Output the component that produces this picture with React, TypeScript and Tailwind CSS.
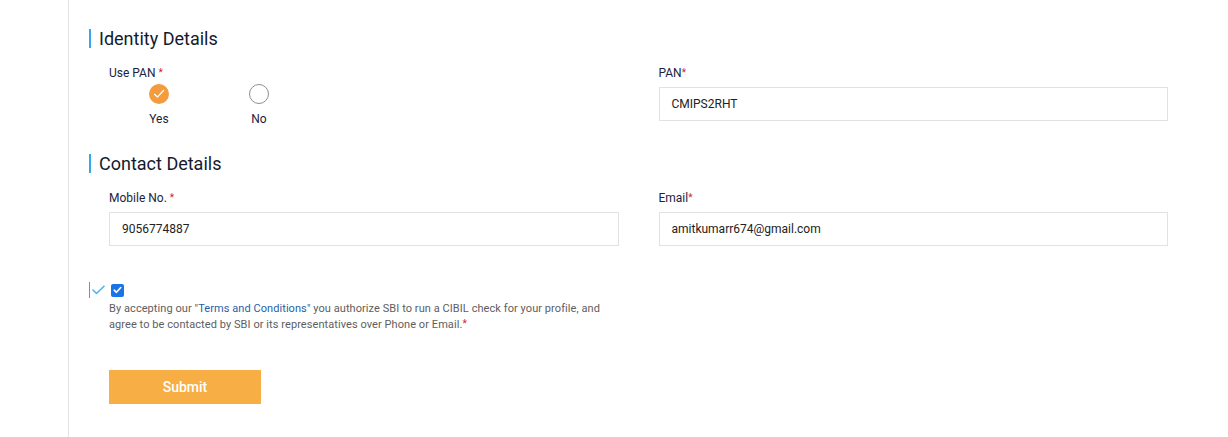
import React from "react";

const Star = () => (
  <span className="text-[#d6232f] text-[10px] relative -top-[1px]">*</span>
);

const SectionHeading = ({ children }: { children: React.ReactNode }) => (
  <div className="flex items-center h-[19px]">
    <div className="w-[2px] h-[19px] bg-[#3aa6ea]" />
    <div className="ml-[8px] text-[18px] leading-[19px] text-[#141a2e]">{children}</div>
  </div>
);

const Label = ({ children }: { children: React.ReactNode }) => (
  <div className="text-[12px] leading-[14px] text-[#1b2340]">{children}</div>
);

const Input = ({ value }: { value: string }) => (
  <div className="h-[34px] border border-[#e2e2e2] bg-white flex items-center px-[12px] text-[12px] text-[#222]">
    {value}
  </div>
);

export default function App() {
  return (
    <div
      className="flex min-h-[437px] bg-white"
      style={{ fontFamily: "Roboto, 'Noto Sans', Arial, sans-serif" }}
    >
      <div className="w-[68px] shrink-0" />
      <div className="w-px shrink-0 bg-[#e3e3e3]" />
      <div className="pl-[20px] pt-[29px] w-[1099px]">
        <SectionHeading>Identity Details</SectionHeading>
        <div className="grid grid-cols-2 gap-x-[40px] pl-[20px] mt-[18px]">
          <div>
            <Label>
              Use PAN <Star />
            </Label>
            <div className="flex mt-[3px]">
              <div className="w-[100px] flex flex-col items-center">
                <div className="w-[20px] h-[20px] rounded-full bg-[#f39b3d] flex items-center justify-center">
                  <svg width="12" height="10" viewBox="0 0 12 10" fill="none">
                    <path d="M1.5 5.2 L4.5 8 L10.5 1.5" stroke="#fff" strokeWidth="1.2" strokeLinecap="round" strokeLinejoin="round" />
                  </svg>
                </div>
                <div className="mt-[8px] text-[12px] leading-[14px] text-[#1b2340]">Yes</div>
              </div>
              <div className="w-[100px] flex flex-col items-center">
                <div className="w-[20px] h-[20px] rounded-full border border-[#8f8f8f] bg-white" />
                <div className="mt-[8px] text-[12px] leading-[14px] text-[#1b2340]">No</div>
              </div>
            </div>
          </div>
          <div>
            <Label>
              PAN<Star />
            </Label>
            <div className="mt-[6px]">
              <Input value="CMIPS2RHT" />
            </div>
          </div>
        </div>

        <div className="mt-[28px]">
          <SectionHeading>Contact Details</SectionHeading>
        </div>
        <div className="grid grid-cols-2 gap-x-[40px] pl-[20px] mt-[18px]">
          <div>
            <Label>
              Mobile No. <Star />
            </Label>
            <div className="mt-[6px]">
              <Input value="9056774887" />
            </div>
          </div>
          <div>
            <Label>
              Email<Star />
            </Label>
            <div className="mt-[6px]">
              <Input value="amitkumarr674@gmail.com" />
            </div>
          </div>
        </div>

        <div className="mt-[36px] flex items-center h-[16px]">
          <div className="w-px h-[16px] bg-[#3aa6ea]" />
          <svg className="ml-[2px]" width="13" height="10" viewBox="0 0 13 10" fill="none">
            <path d="M1 5 L4.5 8.5 L12 1.2" stroke="#4fb3ee" strokeWidth="1.6" strokeLinecap="round" strokeLinejoin="round" />
          </svg>
          <div className="ml-[6px] w-[13px] h-[13px] rounded-[2px] bg-[#1a73e8] flex items-center justify-center">
            <svg width="9" height="8" viewBox="0 0 9 8" fill="none">
              <path d="M1.2 4.2 L3.5 6.3 L7.8 1.5" stroke="#fff" strokeWidth="1.6" strokeLinecap="round" strokeLinejoin="round" />
            </svg>
          </div>
        </div>
        <p className="pl-[20px] mt-[3px] text-[11px] leading-[16px] tracking-[0.07px] text-[#5e5e5e]">
          By accepting our "<span className="text-[#1f5fa8]">Terms and Conditions</span>" you authorize SBI to run a CIBIL check for your profile, and
          <br />
          agree to be contacted by SBI or its representatives over Phone or Email.<Star />
        </p>

        <div className="pl-[20px] mt-[37px]">
          <button className="w-[152px] h-[34px] bg-[#f6ae45] text-white text-[14px] font-medium">
            Submit
          </button>
        </div>
      </div>
    </div>
  );
}
